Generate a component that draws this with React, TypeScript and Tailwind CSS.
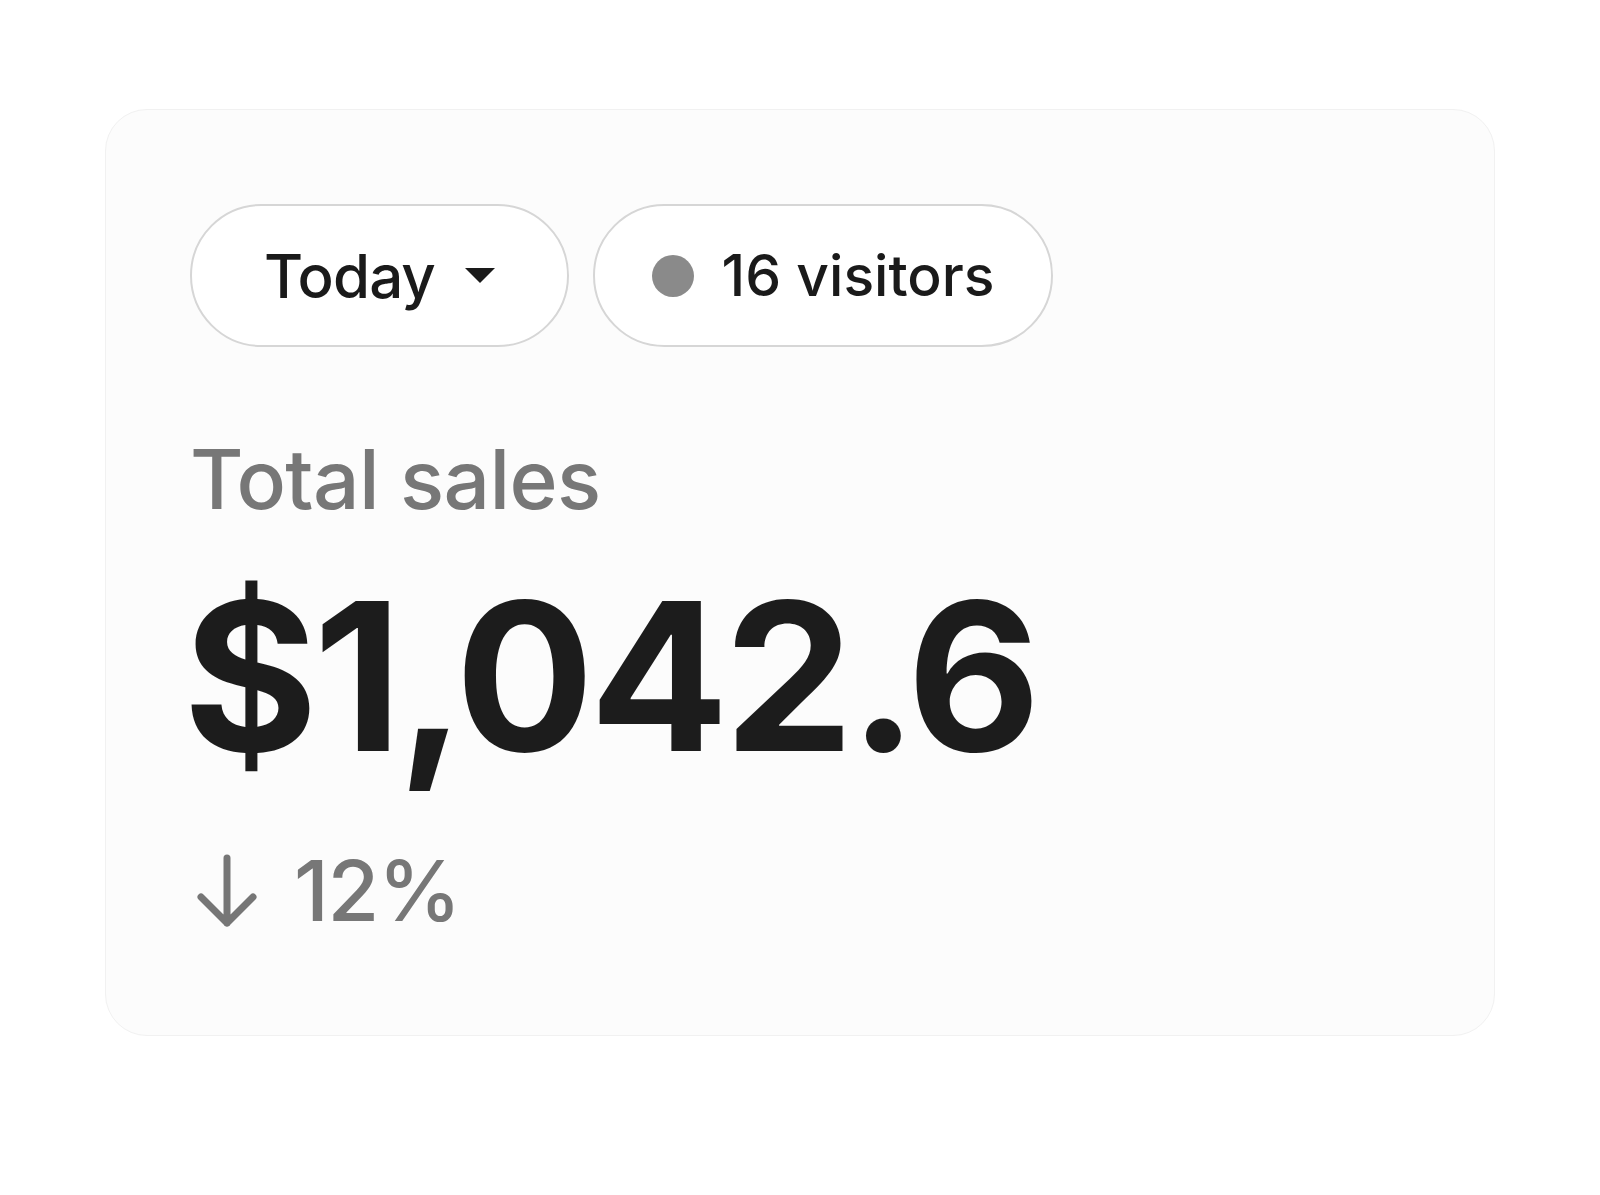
import React from "react";

function Caret() {
  return (
    <svg width="30" height="15" viewBox="0 0 30 15" className="shrink-0">
      <path d="M0 0 H30 L15 15 Z" fill="#1a1a1a" />
    </svg>
  );
}

function ArrowDown() {
  return (
    <svg width="62" height="74" viewBox="0 0 62 74" fill="none" className="shrink-0">
      <path
        d="M31 4 V69 M5 43 L31 69 L57 43"
        stroke="#767676"
        strokeWidth="7"
        strokeLinecap="round"
        strokeLinejoin="round"
      />
    </svg>
  );
}

export default function App() {
  return (
    <div className="min-h-[1195px] w-full bg-white pt-[109px] font-['Inter',sans-serif]">
      <div className="mx-auto h-[927px] w-[1390px] rounded-[42px] border border-[#f1f1f1] bg-[#fcfcfc] pl-[84px] pt-[94px]">
        {/* Filters */}
        <div className="flex gap-[24px]">
          <button className="flex h-[143px] w-[379px] items-center justify-center gap-[30px] rounded-full border-2 border-[#d6d6d6] bg-white text-[60px] font-medium leading-none tracking-[-0.015em] text-[#1a1a1a]">
            <span>Today</span>
            <Caret />
          </button>
          <div className="flex h-[143px] w-[460px] items-center justify-center gap-[28px] rounded-full border-2 border-[#d6d6d6] bg-white text-[57px] font-medium leading-none text-[#1a1a1a]">
            <span className="h-[42px] w-[42px] rounded-full bg-[#8a8a8a]" />
            <span>16 visitors</span>
          </div>
        </div>

        {/* Sales */}
        <div className="mt-[92px] text-[82px] font-medium leading-none tracking-[-0.008em] text-[#777777]">
          Total sales
        </div>
        <div className="-ml-[7px] mt-[52px] text-[206px] font-bold leading-none tracking-[-0.023em] text-[#1c1c1c]">
          $1,042.6
        </div>
        <div className="mt-[70px] flex items-center gap-[36px] pl-[6px] text-[84px] font-medium leading-none tracking-[-0.015em] text-[#777777]">
          <ArrowDown />
          <span>12%</span>
        </div>
      </div>
    </div>
  );
}
